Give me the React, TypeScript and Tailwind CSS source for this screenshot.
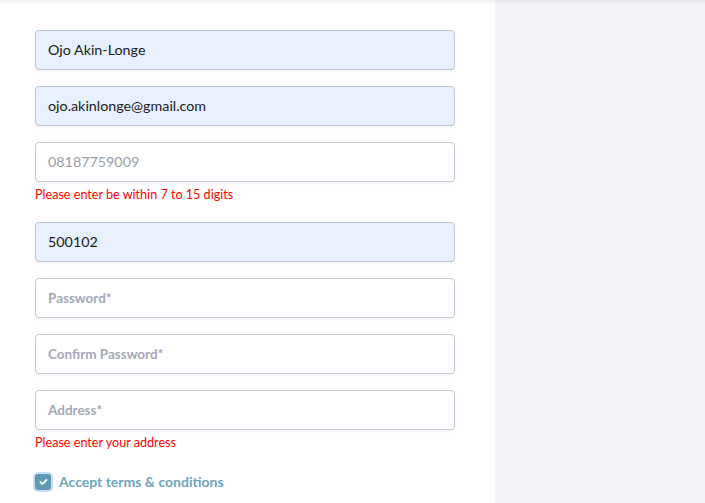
import React from 'react';

const font = { fontFamily: 'Lato, "Open Sans", "Liberation Sans", sans-serif' };

type FieldProps = {
  value?: string;
  placeholder: string;
  filled?: boolean;
  error?: string;
  muted?: boolean;
};

const Field: React.FC<FieldProps> = ({ value, placeholder, filled, error, muted }) => (
  <div className="flex flex-col">
    <div
      className={`h-[40px] w-[420px] rounded-[4px] border border-[#bfc6d6] px-3 flex items-center shadow-[0_1px_3px_rgba(0,0,0,0.06)] ${
        filled ? 'bg-[#e8f0fe]' : 'bg-white'
      }`}
    >
      {value ? (
        <span className={`text-[14.3px] ${muted ? 'text-[#9a9ea8]' : 'text-[#1a1a1a]'}`}>{value}</span>
      ) : (
        <span className="text-[13.5px] font-bold text-[#a3a8b8]">{placeholder}</span>
      )}
    </div>
    {error && <p className="mt-[6px] mb-[4px] text-[12.6px] leading-[14px] text-[#ff0000]">{error}</p>}
  </div>
);

export default function App() {
  return (
    <div className="relative flex h-[503px] w-[705px] overflow-hidden" style={font}>
      <div className="pointer-events-none absolute inset-x-0 top-0 h-[4px] bg-gradient-to-b from-[rgba(0,0,0,0.07)] to-transparent" />
      <div className="w-[495px] bg-white pl-[35px] pt-[30px] flex flex-col">
        <div className="flex flex-col gap-[16px]">
          <Field value="Ojo Akin-Longe" placeholder="Full name*" filled />
          <Field value="ojo.akinlonge@gmail.com" placeholder="Email*" filled />
          <Field value="08187759009" placeholder="Phone*" muted error="Please enter be within 7 to 15 digits" />
          <Field value="500102" placeholder="Zip code*" filled />
          <Field placeholder="Password*" />
          <Field placeholder="Confirm Password*" />
          <Field placeholder="Address*" error="Please enter your address" />
        </div>
        <label className="mt-[17px] flex items-center gap-[8px]">
          <span className="flex h-[16px] w-[16px] items-center justify-center rounded-[3px] bg-[#5e9cb3] ring-2 ring-[#c6dcf5]">
            <svg width="9" height="8" viewBox="0 0 9 8" fill="none">
              <path d="M1.5 4.2 L3.6 6 L7.5 1.8" stroke="white" strokeWidth="1.8" strokeLinecap="round" strokeLinejoin="round" />
            </svg>
          </span>
          <span className="text-[14px] font-bold text-[#6ea5bb]">Accept terms &amp; conditions</span>
        </label>
      </div>
      <div className="flex-1 bg-[#f3f4f8]" />
    </div>
  );
}
